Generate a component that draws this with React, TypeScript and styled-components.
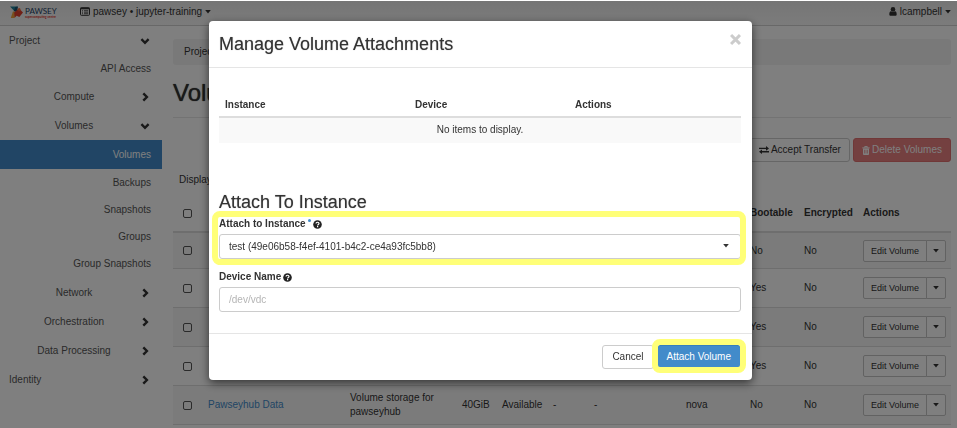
import React from "react";
import styled, { createGlobalStyle, css } from "styled-components";

const GlobalStyle = createGlobalStyle`
  *, *::before, *::after { box-sizing: border-box; }
  body {
    margin: 0;
    background: #fff;
    color: #333;
    font: 10px/14px "Liberation Sans", Arial, sans-serif;
  }
  button, input, select { font: inherit; color: inherit; margin: 0; }
  h1, h2, h3, ul, ol { margin: 0; padding: 0; font-weight: 400; }
  ul, ol { list-style: none; }
  a { color: inherit; text-decoration: none; }
  svg { display: block; flex: none; }
`;

/* ---------- icons ---------- */

const Caret = () => (
  <svg width="6" height="4" viewBox="0 0 6 4" aria-hidden="true">
    <path d="M0.2 0h5.6L3 3.6z" fill="currentColor" />
  </svg>
);

const Chevron = ({ open }: { open?: boolean }) => (
  <svg width="12" height="12" viewBox="0 0 12 12" aria-hidden="true">
    <path
      d={open ? "M2.4 4.2L6 7.800l3.600-3.600" : "M4.300 2.400L7.900 6l-3.600 3.600"}
      fill="none"
      stroke="currentColor"
      strokeWidth="2.400"
    />
  </svg>
);

const ListIcon = () => (
  <svg width="10" height="9" viewBox="0 0 10 9" aria-hidden="true">
    <rect x="0.500" y="0.700" width="9" height="7.600" rx="0.800" fill="none" stroke="currentColor" />
    <path d="M0.500 1.500h9" stroke="currentColor" strokeWidth="1.600" />
    <path d="M2 3.700h1M4 3.700h4.200M2 5.200h1M4 5.200h4.200M2 6.700h1M4 6.700h4.200" stroke="currentColor" strokeWidth="0.800" />
  </svg>
);

const UserIcon = () => (
  <svg width="8" height="9" viewBox="0 0 8 9" aria-hidden="true">
    <circle cx="4" cy="2.400" r="2.300" fill="currentColor" />
    <path d="M2 4.300C0.700 4.500 0.300 5.800 0.300 7.300c0 1 .6 1.500 1.400 1.500h4.600c.8 0 1.400-.5 1.400-1.500 0-1.500-.4-2.800-1.700-3-1 1-3 1-4 0z" fill="currentColor" />
  </svg>
);

const ExchangeIcon = () => (
  <svg width="10" height="8" viewBox="0 0 10 8" aria-hidden="true">
    <path d="M0 1.700h7V0l3 2.400-3 2.300V3H0zM10 6.400H3V8L0 5.700l3-2.300V5h7z" fill="currentColor" />
  </svg>
);

const TrashIcon = () => (
  <svg width="8" height="9" viewBox="0 0 8 9" aria-hidden="true">
    <path d="M2.700 1.500V.6h2.600v.9M.3 1.900h7.400" fill="none" stroke="currentColor" strokeWidth="1" />
    <path d="M1 2.500h6V8c0 .6-.3 1-.8 1H1.800C1.300 9 1 8.600 1 8zM2.400 3.800v3.700h.6V3.800zm1.300 0v3.700h.6V3.800zm1.300 0v3.700h.6V3.800z" fill="currentColor" fillRule="evenodd" />
  </svg>
);

const HelpIcon = () => (
  <svg width="9" height="9" viewBox="0 0 9 9" role="img" aria-label="Help">
    <circle cx="4.500" cy="4.500" r="4.300" fill="#222" />
    <path d="M3 3.500c.1-1.700 3.100-1.600 3 .1 0 .9-1.400.9-1.400 1.900" fill="none" stroke="#fff" strokeWidth="1.200" />
    <path d="M4 6.100h1.200v1.200H4z" fill="#fff" />
  </svg>
);

const CloseIcon = () => (
  <svg width="11" height="11" viewBox="0 0 10 10" aria-hidden="true">
    <path d="M1.900 1.900l6.200 6.200M8.100 1.900L1.900 8.100" stroke="currentColor" strokeWidth="2.700" strokeLinecap="square" />
  </svg>
);

const Logo = () => (
  <svg width="50" height="17" viewBox="0 0 50 17" role="img" aria-label="Pawsey Supercomputing Centre">
    <path d="M0 2.500h7.500L5.200 8z" fill="#1d7f97" />
    <path d="M5.300 3l2.700-.5L7 8 3.800 7z" fill="#18506e" />
    <path d="M3 7.200L6 8.500 4.500 14H.8z" fill="#f0a23c" />
    <path d="M4.200 8.500L9 4.400l4 4.200-3.700 4.300-2.600-1.200-2 2z" fill="#e0402f" />
    <path d="M7.500 4.800L10 4l.8 2.600-2 1z" fill="#f26a3a" />
    <text x="15" y="10" fontFamily="Lato, sans-serif" fontSize="8" fill="#1c3f66">PAWSEY</text>
    <text x="15" y="14" fontFamily="Lato, sans-serif" fontWeight="700" fontSize="3" fill="#e2342c">supercomputing centre</text>
  </svg>
);

/* ---------- page ---------- */

const Page = styled.div`
  min-height: 100vh;
  padding-top: 1px;
  overflow: hidden;
`;

const TopBar = styled.header`
  display: flex;
  align-items: flex-start;
  height: 25px;
  padding: 3px 6px 0 10px;
  background: linear-gradient(#ebebeb, #f8f8f8);
  border-bottom: 1px solid #d0d0d0;
`;

const TopButton = styled.button<{ $end?: boolean }>`
  display: flex;
  align-items: center;
  gap: 3px;
  height: 15px;
  padding: 0;
  border: 0;
  background: none;
  margin-left: ${(p) => (p.$end ? "auto" : "20px")};
`;

const Columns = styled.div`
  display: flex;
  align-items: flex-start;
`;

const Sidebar = styled.nav`
  flex: none;
  width: 162px;
  color: #555;
`;

const SubMenu = styled.ul`
  padding-bottom: 1px;
`;

const NavGroup = styled.button<{ $nested?: boolean }>`
  display: flex;
  align-items: center;
  width: 100%;
  height: 29px;
  padding: 0 11px 0 9px;
  border: 0;
  background: none;
  text-align: ${(p) => (p.$nested ? "center" : "left")};
  svg { color: #333; }
`;

const NavText = styled.span`
  flex: 1;
`;

const NavLeaf = styled.a<{ $active?: boolean }>`
  display: block;
  padding: 0 11px;
  text-align: right;
  line-height: 27px;
  ${(p) =>
    p.$active &&
    css`
      background: #428bca;
      color: #fff;
      line-height: 29px;
    `}
`;

const Main = styled.main`
  flex: 1;
  min-width: 0;
  padding: 13px 6px 0 11px;
`;

const Breadcrumb = styled.ol`
  display: flex;
  gap: 10px;
  padding: 6px 11px;
  background: #f3f3f3;
  border-radius: 3px;
`;

const PageTitle = styled.h1`
  margin-top: 14px;
  padding-bottom: 10px;
  border-bottom: 1px solid #e6e6e6;
  font-size: 24px;
  font-weight: 500;
  line-height: 28px;
  text-shadow: 0 0 1px currentColor;
`;

const Toolbar = styled.div`
  display: flex;
  justify-content: flex-end;
  gap: 3px;
  margin-top: 20px;
`;

const Button = styled.button<{ $tone?: "primary" | "danger"; $compact?: boolean }>`
  display: flex;
  align-items: center;
  justify-content: center;
  gap: 2px;
  height: 24px;
  padding: 0 ${(p) => (p.$compact ? "8px" : "9px")};
  border: 1px solid #ccc;
  border-radius: 3px;
  background: #fff;
  white-space: nowrap;
  ${(p) =>
    p.$tone === "primary" &&
    css`
      background: #428bca;
      border-color: #357ebd;
      color: #fff;
    `}
  ${(p) =>
    p.$tone === "danger" &&
    css`
      background: #e88080;
      border-color: #e07070;
      color: #fff;
    `}
`;

const Count = styled.p`
  margin: 11px 6px 12px;
`;

const VolumeTable = styled.table`
  width: 100%;
  table-layout: fixed;
  border-collapse: separate;
  border-spacing: 0;
  th, td {
    padding: 0 0 0 6px;
    text-align: left;
    white-space: nowrap;
  }
  th { height: 34px; border-bottom: 2px solid #ddd; padding-bottom: 4px; }
  td { height: 39px; border-bottom: 1px solid #ddd; }
  tbody tr:first-child td { height: 36px; }
  tbody tr:nth-child(odd) { background: #f7f7f7; }
  a { color: #428bca; }
`;

const Col = styled.col<{ $w?: number }>`
  width: ${(p) => (p.$w ? `${p.$w}px` : "auto")};
`;

const WrapCell = styled.td`
  && { white-space: normal; }
`;

const Check = styled.input`
  appearance: none;
  display: block;
  width: 9px;
  height: 9px;
  margin: 0 0 0 4px;
  border: 1px solid #555;
  border-radius: 2px;
`;

const Split = styled.div`
  display: flex;
`;

const SplitButton = styled.button<{ $menu?: boolean }>`
  display: flex;
  align-items: center;
  justify-content: center;
  height: 22px;
  padding: 0 ${(p) => (p.$menu ? "6px" : "7px")};
  border: 1px solid #c4c4c4;
  border-radius: ${(p) => (p.$menu ? "0 2px 2px 0" : "2px 0 0 2px")};
  margin-left: ${(p) => (p.$menu ? "-1px" : "0")};
  background: #fff;
  && { font-size: 9px; }
`;

/* ---------- dialog ---------- */

const Backdrop = styled.div`
  position: fixed;
  inset: 1px 0 0 0;
  padding: 20px 0 0 4px;
  background: rgba(0, 0, 0, 0.5);
`;

const Dialog = styled.section`
  width: 100%;
  max-width: 543px;
  margin: 0 auto;
  background: #fff;
  border-radius: 4px;
  box-shadow: 0 3px 10px rgba(0, 0, 0, 0.6);
`;

const DialogHeader = styled.header`
  display: flex;
  justify-content: space-between;
  align-items: flex-start;
  padding: 13px 11px 13px 10px;
  border-bottom: 1px solid #e5e5e5;
`;

const DialogTitle = styled.h2`
  font-size: 18px;
  font-weight: 500;
  line-height: 20px;
  text-shadow: 0 0 1px #999;
`;

const CloseButton = styled.button`
  padding: 0;
  border: 0;
  background: none;
  && { color: #ccc; }
`;

const DialogBody = styled.div`
  padding: 24px 11px 21px 10px;
`;

const AttachTable = styled.table`
  width: 100%;
  table-layout: fixed;
  border-collapse: separate;
  border-spacing: 0;
  th { padding: 6px 6px 4px; text-align: left; border-bottom: 2px solid #ddd; }
  th:nth-child(1) { width: 190px; }
  th:nth-child(2) { width: 160px; }
  td { padding: 5px 6px 6px; text-align: center; background: #f9f9f9; }
`;

const SectionTitle = styled.h3`
  margin-top: 49px;
  font-size: 18px;
  font-weight: 500;
  line-height: 20px;
  text-shadow: 0 0 1px #999;
`;

const Field = styled.div<{ $spaced?: boolean }>`
  position: relative;
  margin-top: ${(p) => (p.$spaced ? "11px" : "5px")};
`;

const LabelRow = styled.div`
  display: flex;
  align-items: center;
  gap: 2px;
  padding-bottom: 3px;
`;

const Label = styled.label`
  font-weight: 700;
`;

const Required = styled.span`
  width: 3px;
  height: 3px;
  margin-bottom: 8px;
  border-radius: 50%;
  background: #428bca;
`;

const control = css`
  display: block;
  width: 100%;
  height: 25px;
  padding: 0 9px;
  border: 1px solid #ccc;
  border-radius: 3px;
  background: #fff;
  outline: 0;
`;

const Select = styled.select`
  ${control}
  appearance: none;
`;

const SelectCaret = styled.span`
  position: absolute;
  right: 12px;
  bottom: 11px;
  pointer-events: none;
`;

const TextInput = styled.input`
  ${control}
  &::placeholder { color: #b5b5b5; opacity: 1; }
`;

const Highlight = styled.span<{ $tight?: boolean }>`
  position: absolute;
  inset: ${(p) => (p.$tight ? "-6px -5px -4px" : "-6px -5px -6px -7px")};
  border: 6px solid #ffff78;
  border-radius: 8px;
  pointer-events: none;
`;

const DialogFooter = styled.footer`
  display: flex;
  justify-content: flex-end;
  gap: 3px;
  padding: 11px;
  border-top: 1px solid #e5e5e5;
`;

const Marked = styled.div`
  position: relative;
`;

const volumes = [
  { bootable: "No" },
  { bootable: "Yes" },
  { bootable: "Yes" },
  { bootable: "Yes" },
  {
    name: "Pawseyhub Data",
    description: "Volume storage for pawseyhub",
    size: "40GiB",
    status: "Available",
    group: "-",
    type: "-",
    zone: "nova",
    bootable: "No",
  },
];

const columnWidths = [29, 142, undefined, 40, 51, 41, 92, 64, 54, 59, 94];

const Group = ({ label, open, nested }: { label: string; open?: boolean; nested?: boolean }) => (
  <NavGroup type="button" $nested={nested} aria-expanded={!!open}>
    <NavText>{label}</NavText>
    <Chevron open={open} />
  </NavGroup>
);

export default function App() {
  return (
    <>
      <GlobalStyle />
      <Page>
        <TopBar>
          <a href="#home"><Logo /></a>
          <TopButton type="button"><ListIcon />pawsey • jupyter-training<Caret /></TopButton>
          <TopButton type="button" $end><UserIcon />lcampbell<Caret /></TopButton>
        </TopBar>
        <Columns>
          <Sidebar>
            <Group label="Project" open />
            <NavLeaf href="#api">API Access</NavLeaf>
            <Group label="Compute" nested />
            <Group label="Volumes" nested open />
            <SubMenu>
              <li><NavLeaf href="#volumes" $active>Volumes</NavLeaf></li>
              <li><NavLeaf href="#backups">Backups</NavLeaf></li>
              <li><NavLeaf href="#snapshots">Snapshots</NavLeaf></li>
              <li><NavLeaf href="#groups">Groups</NavLeaf></li>
              <li><NavLeaf href="#group-snapshots">Group Snapshots</NavLeaf></li>
            </SubMenu>
            <Group label="Network" nested />
            <Group label="Orchestration" nested />
            <Group label="Data Processing" nested />
            <Group label="Identity" />
          </Sidebar>
          <Main>
            <Breadcrumb><li>Project</li></Breadcrumb>
            <PageTitle>Volumes</PageTitle>
            <Toolbar>
              <Button type="button" $compact><ExchangeIcon />Accept Transfer</Button>
              <Button type="button" $compact $tone="danger"><TrashIcon />Delete Volumes</Button>
            </Toolbar>
            <Count>Displaying</Count>
            <VolumeTable>
              <colgroup>
                {columnWidths.map((w, i) => <Col key={i} $w={w} />)}
              </colgroup>
              <thead>
                <tr>
                  <th><Check type="checkbox" aria-label="Select all" /></th>
                  <th colSpan={7} />
                  <th>Bootable</th>
                  <th>Encrypted</th>
                  <th>Actions</th>
                </tr>
              </thead>
              <tbody>
                {volumes.map((v, i) => (
                  <tr key={i}>
                    <td><Check type="checkbox" aria-label="Select volume" /></td>
                    <td>{v.name && <a href="#volume">{v.name}</a>}</td>
                    <WrapCell>{v.description}</WrapCell>
                    <td>{v.size}</td>
                    <td>{v.status}</td>
                    <td>{v.group}</td>
                    <td>{v.type}</td>
                    <td>{v.zone}</td>
                    <td>{v.bootable}</td>
                    <td>No</td>
                    <td>
                      <Split>
                        <SplitButton type="button">Edit Volume</SplitButton>
                        <SplitButton type="button" $menu aria-label="More actions"><Caret /></SplitButton>
                      </Split>
                    </td>
                  </tr>
                ))}
              </tbody>
            </VolumeTable>
          </Main>
        </Columns>
      </Page>
      <Backdrop>
        <Dialog role="dialog" aria-modal="true" aria-labelledby="dialog-title">
          <DialogHeader>
            <DialogTitle id="dialog-title">Manage Volume Attachments</DialogTitle>
            <CloseButton type="button" aria-label="Close"><CloseIcon /></CloseButton>
          </DialogHeader>
          <DialogBody>
            <AttachTable>
              <thead>
                <tr><th>Instance</th><th>Device</th><th>Actions</th></tr>
              </thead>
              <tbody>
                <tr><td colSpan={3}>No items to display.</td></tr>
              </tbody>
            </AttachTable>
            <SectionTitle>Attach To Instance</SectionTitle>
            <Field>
              <LabelRow>
                <Label htmlFor="instance">Attach to Instance</Label>
                <Required />
                <HelpIcon />
              </LabelRow>
              <Select id="instance">
                <option>test (49e06b58-f4ef-4101-b4c2-ce4a93fc5bb8)</option>
              </Select>
              <SelectCaret><Caret /></SelectCaret>
              <Highlight />
            </Field>
            <Field $spaced>
              <LabelRow>
                <Label htmlFor="device">Device Name</Label>
                <HelpIcon />
              </LabelRow>
              <TextInput id="device" type="text" placeholder="/dev/vdc" />
            </Field>
          </DialogBody>
          <DialogFooter>
            <Button type="button">Cancel</Button>
            <Marked>
              <Button type="button" $tone="primary">Attach Volume</Button>
              <Highlight $tight />
            </Marked>
          </DialogFooter>
        </Dialog>
      </Backdrop>
    </>
  );
}
